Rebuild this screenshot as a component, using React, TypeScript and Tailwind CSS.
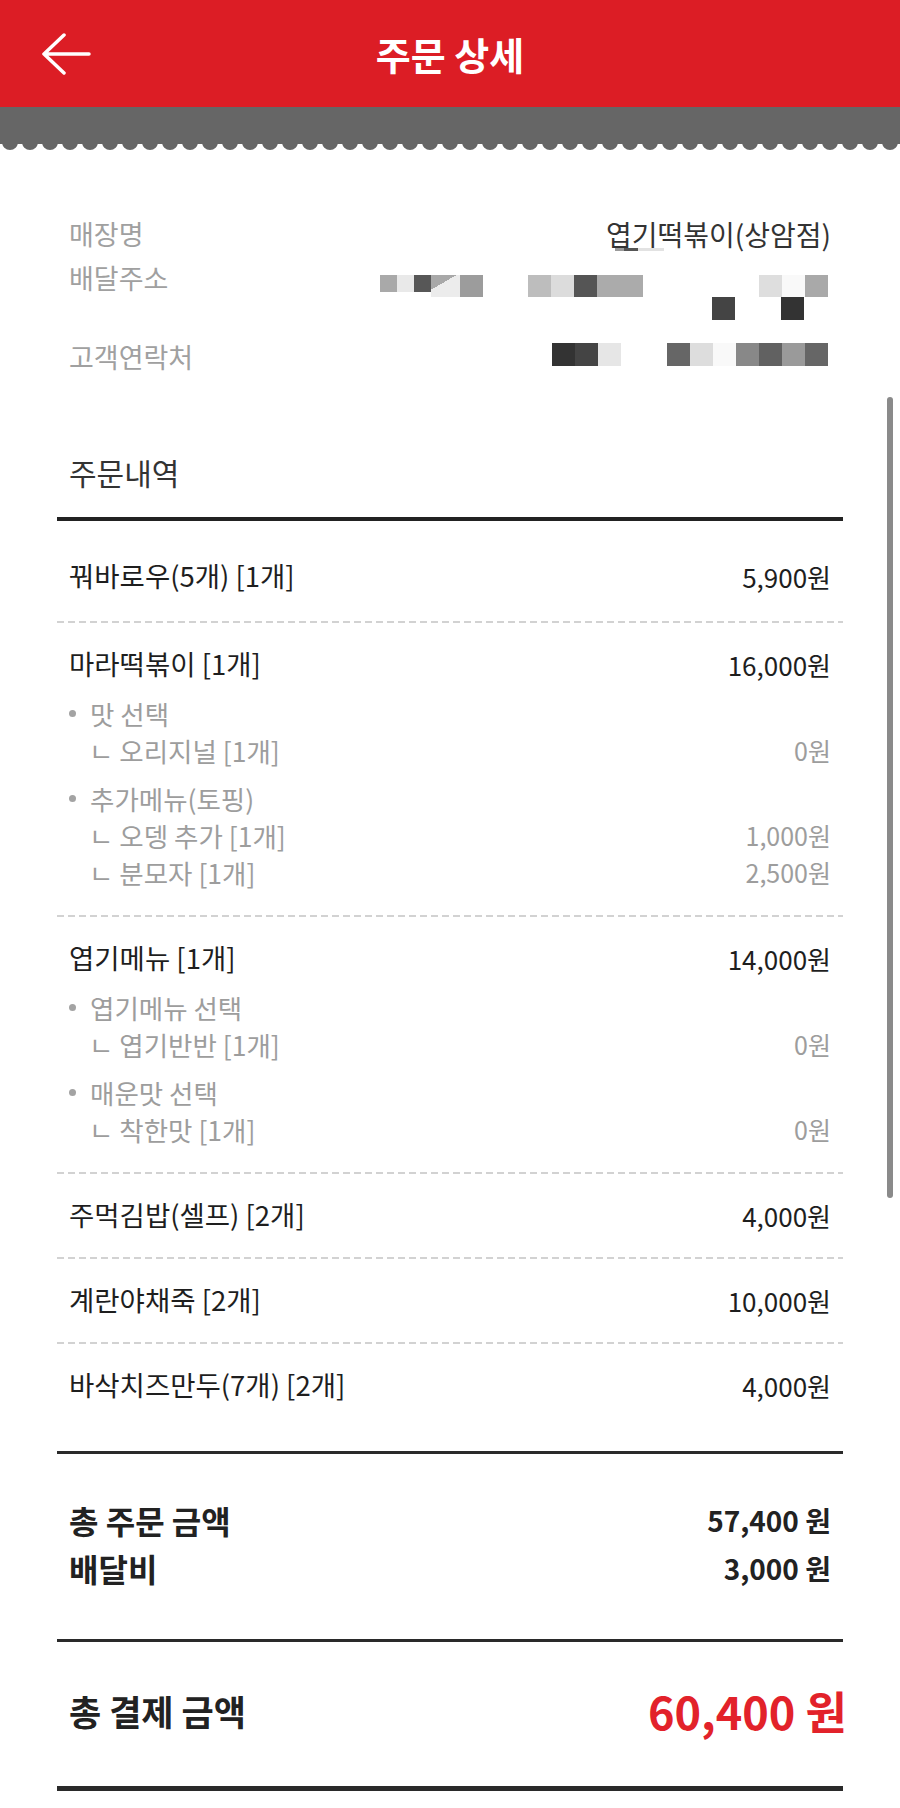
import React from "react";

type Line = { name: string; price: string };
type Opt = { label: string; lines: Line[] };
type Item = { name: string; price: string; options?: Opt[] };

const items: Item[] = [
  { name: "꿔바로우(5개) [1개]", price: "5,900원" },
  {
    name: "마라떡볶이 [1개]",
    price: "16,000원",
    options: [
      { label: "맛 선택", lines: [{ name: "오리지널 [1개]", price: "0원" }] },
      {
        label: "추가메뉴(토핑)",
        lines: [
          { name: "오뎅 추가 [1개]", price: "1,000원" },
          { name: "분모자 [1개]", price: "2,500원" },
        ],
      },
    ],
  },
  {
    name: "엽기메뉴 [1개]",
    price: "14,000원",
    options: [
      { label: "엽기메뉴 선택", lines: [{ name: "엽기반반 [1개]", price: "0원" }] },
      { label: "매운맛 선택", lines: [{ name: "착한맛 [1개]", price: "0원" }] },
    ],
  },
  { name: "주먹김밥(셀프) [2개]", price: "4,000원" },
  { name: "계란야채죽 [2개]", price: "10,000원" },
  { name: "바삭치즈만두(7개) [2개]", price: "4,000원" },
];

// pixelated (masked) address / phone cells
const addrRow1 = [
  "w-[17px] h-[17px] bg-[#a9a9a9]",
  "w-[17px] h-[17px] bg-[#e9e9e9]",
  "w-[17px] h-[17px] bg-[#575757]",
  "w-[29px] h-[22px] bg-[linear-gradient(150deg,#a8a8a8_0_38%,#ececec_38%)]",
  "w-[23px] h-[22px] bg-[#9c9c9c]",
  "w-[45px] h-[22px]",
  "w-[23px] h-[22px] bg-[#bdbdbd]",
  "w-[23px] h-[22px] bg-[#dcdcdc]",
  "w-[23px] h-[22px] bg-[#555555]",
  "w-[23px] h-[22px] bg-[#ababab]",
  "w-[23px] h-[22px] bg-[#ababab]",
  "w-[116px] h-[22px]",
  "w-[23px] h-[22px] bg-[#dedede]",
  "w-[23px] h-[22px] bg-[#f9f9f9]",
  "w-[23px] h-[22px] bg-[#a9a9a9]",
];

const addrRow2 = [
  "w-[23px] h-[23px] bg-[#444444]",
  "w-[46px] h-[23px]",
  "w-[23px] h-[23px] bg-[#333333]",
  "w-[24px] h-[23px]",
];

const phoneRow = [
  "w-[23px] h-[23px] bg-[#333333]",
  "w-[23px] h-[23px] bg-[#444444]",
  "w-[23px] h-[23px] bg-[#e6e6e6]",
  "w-[46px] h-[23px]",
  "w-[23px] h-[23px] bg-[#666666]",
  "w-[23px] h-[23px] bg-[#dddddd]",
  "w-[23px] h-[23px] bg-[#f9f9f9]",
  "w-[23px] h-[23px] bg-[#888888]",
  "w-[23px] h-[23px] bg-[#616161]",
  "w-[23px] h-[23px] bg-[#9a9a9a]",
  "w-[23px] h-[23px] bg-[#666666]",
];

function Mosaic({ cells }: { cells: string[] }) {
  return (
    <div className="flex items-start justify-end pr-[3px]">
      {cells.map((c, i) => (
        <span key={i} className={c} />
      ))}
    </div>
  );
}

function Dashed() {
  return (
    <div className="h-[2px] bg-[repeating-linear-gradient(90deg,#d2d2d2_0_7px,transparent_7px_11px)]" />
  );
}

function OrderItem({ item, first }: { item: Item; first: boolean }) {
  return (
    <div className={first ? "px-[12px] pt-[23px] pb-[27px]" : "px-[12px] pt-[23px] pb-[24px]"}>
      <div className="flex h-[36px] items-center justify-between text-[#1e1e1e]">
        <span className="text-[27.5px]">{item.name}</span>
        <span className="text-[26px]">{item.price}</span>
      </div>
      {item.options && (
        <div className="pt-[2px] text-[#9d9d9d]">
          {item.options.map((opt) => (
            <div key={opt.label} className="mt-[11px]">
              <div className="flex h-[37px] items-center text-[26.5px]">
                <span className="mr-[14px] h-[7px] w-[7px] rounded-full bg-[#a3a3a3]" />
                <span>{opt.label}</span>
              </div>
              {opt.lines.map((l) => (
                <div key={l.name} className="flex h-[37px] items-center justify-between pl-[20px]">
                  <span className="text-[26.5px]">ㄴ {l.name}</span>
                  <span className="text-[25px]">{l.price}</span>
                </div>
              ))}
            </div>
          ))}
        </div>
      )}
    </div>
  );
}

export default function App() {
  return (
    <div className="relative min-h-[1808px] w-full bg-white font-['Noto_Sans_CJK_KR','Noto_Sans',sans-serif]">
      {/* header */}
      <header className="grid h-[107px] grid-cols-[1fr_auto_1fr] items-center bg-[#dc1d25]">
        <div className="pl-[42px]">
          <svg width="50" height="44" viewBox="0 0 50 44" fill="none">
            <path
              d="M2 22 L22 3 M2 22 L22 41 M2 22 H47"
              stroke="white"
              strokeWidth="3.5"
              strokeLinecap="round"
              strokeLinejoin="round"
            />
          </svg>
        </div>
        <h1 className="text-[38px] font-bold leading-none text-white">주문 상세</h1>
        <div />
      </header>
      <div className="h-[37px] bg-[#666666]" />
      <svg width="900" height="8" className="block">
        <defs>
          <pattern id="scallop" width="20" height="8" patternUnits="userSpaceOnUse">
            <circle cx="10" cy="-2" r="8" fill="#666666" />
          </pattern>
        </defs>
        <rect width="900" height="8" fill="url(#scallop)" />
      </svg>

      <main className="px-[57px]">
        {/* store info */}
        <section className="px-[12px] pt-[64px] leading-[36px]">
          <div className="flex h-[44px] items-start justify-between">
            <span className="text-[27px] text-[#a0a0a0]">매장명</span>
            <span className="relative text-[28px] text-[#333333]">
              엽기떡볶이(상암점)
              <span className="absolute bottom-[1px] left-[9px] flex h-[3px]">
                <span className="w-[9px] bg-[#9a9a9a]" />
                <span className="w-[14px] bg-[#555555]" />
                <span className="w-[26px] bg-[#e2e2e2]" />
              </span>
            </span>
          </div>
          <div className="flex h-[79px] items-start justify-between">
            <span className="text-[27px] text-[#a0a0a0]">배달주소</span>
            <div className="mt-[15px] flex flex-col">
              <Mosaic cells={addrRow1} />
              <Mosaic cells={addrRow2} />
            </div>
          </div>
          <div className="flex h-[36px] items-start justify-between">
            <span className="text-[27px] text-[#a0a0a0]">고객연락처</span>
            <div className="mt-[4px]">
              <Mosaic cells={phoneRow} />
            </div>
          </div>
        </section>

        {/* order list */}
        <section className="mt-[77px]">
          <h2 className="h-[69px] border-b-4 border-[#222222] px-[12px] text-[30px] leading-[40px] text-[#333333]">
            주문내역
          </h2>
          <div className="pt-[14px] pb-[24px]">
            {items.map((item, i) => (
              <div key={item.name}>
                {i > 0 && <Dashed />}
                <OrderItem item={item} first={i === 0} />
              </div>
            ))}
          </div>
        </section>

        {/* totals */}
        <section className="border-t-[3px] border-[#2a2a2a] px-[12px] pt-[42px] pb-[47px] font-bold text-[#222222]">
          <div className="flex h-[48px] items-center justify-between">
            <span className="text-[32px]">총 주문 금액</span>
            <span className="text-[28px]">57,400 원</span>
          </div>
          <div className="flex h-[48px] items-center justify-between">
            <span className="text-[32px]">배달비</span>
            <span className="text-[28px]">3,000 원</span>
          </div>
        </section>

        <section className="border-t-[3px] border-b-[5px] border-[#2a2a2a] pt-[39px] pb-[45px] pl-[12px] font-bold">
          <div className="flex h-[60px] items-center justify-between">
            <span className="text-[35px] text-[#222222]">총 결제 금액</span>
            <span className="mr-[-4px] text-[45px] text-[#e2222a]">60,400 원</span>
          </div>
        </section>
      </main>

      {/* scrollbar */}
      <div className="absolute left-[887px] top-[397px] h-[801px] w-[6px] rounded-full bg-[#8a8a8a]" />
    </div>
  );
}
